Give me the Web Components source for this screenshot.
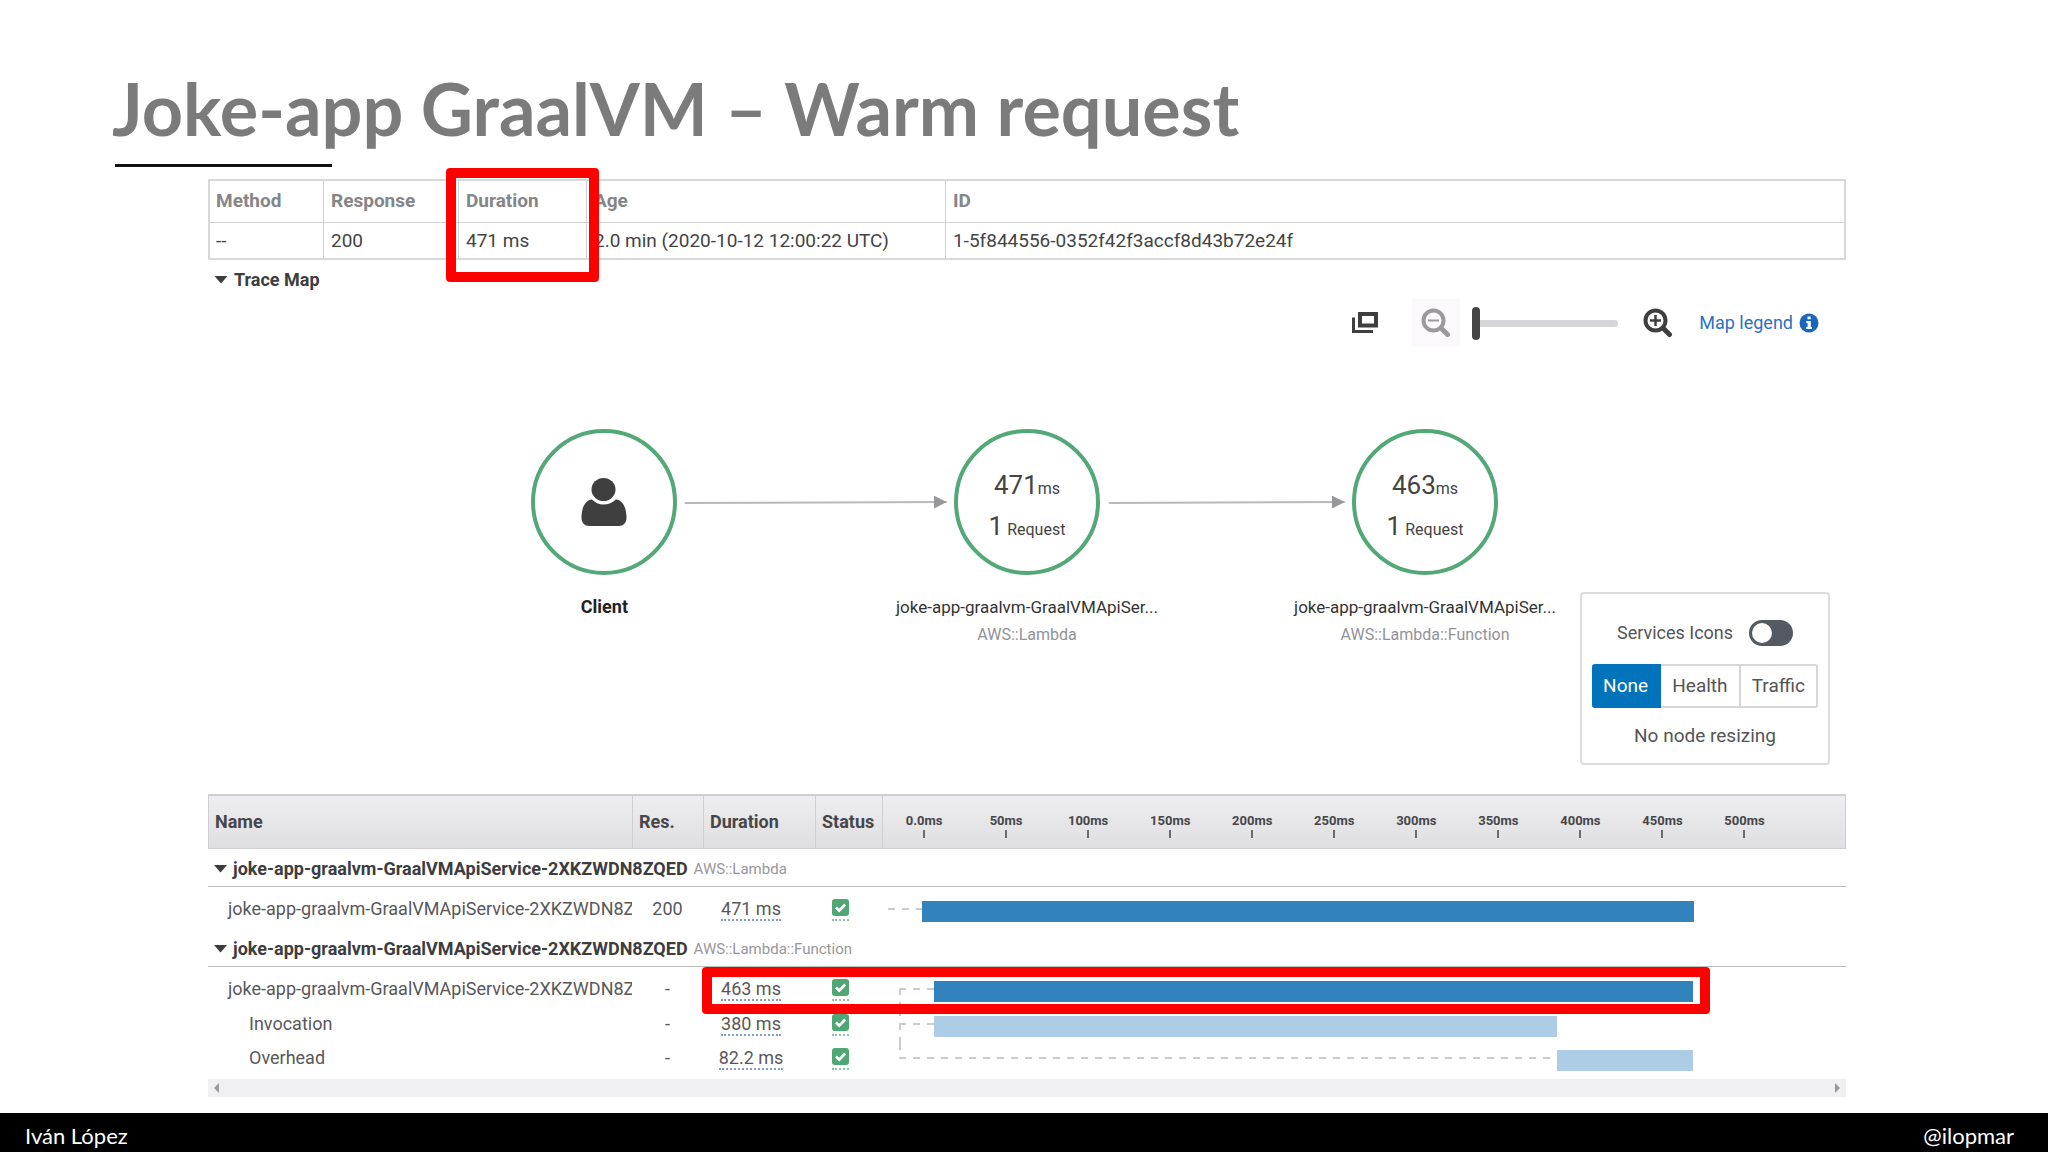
<!DOCTYPE html>
<html lang="en">
<head>
<meta charset="utf-8">
<title>Joke-app GraalVM – Warm request</title>
<style>
body {
    margin: 0;
    background: #fff;
    color: #444;
    font-family: Roboto, "Liberation Sans", sans-serif;
    font-size: 19px;
    line-height: 24px;
}
</style>
</head>
<body>
<slide-page>
    <slide-title slot="title">Joke-app GraalVM – Warm request</slide-title>
    <trace-summary></trace-summary>
    <trace-map></trace-map>
    <trace-timeline></trace-timeline>
    <slide-footer slot="footer">
        <span>Iván López</span>
        <span slot="handle">@ilopmar</span>
    </slide-footer>
</slide-page>

<script>
/**
 * Base for all elements here: puts the static `html` of the class
 * in an open shadow root.
 */
class BaseElement extends HTMLElement {
    constructor() {
        super();
        this.attachShadow({mode: 'open'});
        const template = document.createElement('template');
        template.innerHTML = this.constructor.html;
        this.shadowRoot.appendChild(template.content.cloneNode(true));
    }
}

class SlidePage extends BaseElement {
    static html = `
<style>
:host {
    display: flex;
    flex-direction: column;
    min-height: 100vh;
}
main {
    flex: 1;
    margin: 12px 202px 16px 208px;
}
</style>
<slot name="title"></slot>
<main><slot></slot></main>
<slot name="footer"></slot>
`;
}

class SlideTitle extends BaseElement {
    static html = `
<style>
:host {
    display: block;
    padding: 66px 112px 0;
}
h1 {
    margin: 0;
    color: #7b7b7c;
    font: 700 72px/84px Lato, "Open Sans", sans-serif;
}
h1::after {
    content: "";
    display: block;
    width: 217px;
    height: 3px;
    margin: 14px 0 0 3px;
    background: #111;
}
</style>
<h1><slot></slot></h1>
`;
}

class SlideFooter extends BaseElement {
    static html = `
<style>
footer {
    display: flex;
    justify-content: space-between;
    padding: 10px 34px 3px 25px;
    background: #000;
    color: #fff;
    font: 22px/26px Lato, sans-serif;
}
</style>
<footer><slot></slot><slot name="handle"></slot></footer>
`;
}

/**
 * Red frame around something important. The parent decides where.
 */
class HighlightBox extends BaseElement {
    static html = `
<style>
:host {
    position: absolute;
    box-sizing: border-box;
    border: 10px solid #f00;
    border-radius: 4px;
    pointer-events: none;
}
</style>
`;
}

class TraceSummary extends BaseElement {
    static html = `
<style>
:host {
    display: block;
}
table {
    width: 100%;
    table-layout: fixed;
    border-collapse: collapse;
    border: 2px solid #d8d8da;
}
th, td {
    position: relative;
    padding: 6px 7px 5px;
    border: 1px solid #d0d0d3;
    text-align: left;
    font-weight: 400;
    white-space: nowrap;
}
th {
    padding: 8px 7px 9px;
    color: #858587;
    font-weight: 700;
}
th:first-child, td:first-child {
    padding-left: 6px;
}
.method { width: 100px; }
.response { width: 120px; }
.duration { width: 113px; }
.age { width: 344px; }
highlight-box {
    top: -13px;
    left: -13px;
    right: -13px;
    height: 114px;
    z-index: 1;
}
</style>
<table>
    <thead>
        <tr>
            <th class="method">Method</th>
            <th class="response">Response</th>
            <th class="duration">Duration<highlight-box></highlight-box></th>
            <th class="age">Age</th>
            <th>ID</th>
        </tr>
    </thead>
    <tbody>
        <tr>
            <td>--</td>
            <td>200</td>
            <td>471 ms</td>
            <td>2.0 min (2020-10-12 12:00:22 UTC)</td>
            <td>1-5f844556-0352f42f3accf8d43b72e24f</td>
        </tr>
    </tbody>
</table>
`;
}

class MapToolbar extends BaseElement {
    static html = `
<style>
:host {
    display: flex;
    align-items: center;
    justify-content: flex-end;
    padding-right: 27px;
    height: 50px;
}
button {
    display: flex;
    align-items: center;
    justify-content: center;
    width: 48px;
    height: 48px;
    padding: 0;
    border: 0;
    background: none;
    color: #3f3f40;
}
button:disabled {
    background: #fbf9fb;
    color: #9a9a9a;
}
.pop {
    margin-right: 23px;
}
input {
    appearance: none;
    width: 146px;
    height: 34px;
    margin: 0 16px 0 12px;
    background: none;
}
input::-webkit-slider-runnable-track {
    height: 7px;
    border-radius: 4px;
    background: #d6d5d7;
}
input::-webkit-slider-thumb {
    appearance: none;
    width: 8px;
    height: 33px;
    margin-top: -13px;
    border-radius: 4px;
    background: #454546;
}
a {
    display: flex;
    align-items: center;
    gap: 6px;
    margin-left: 17px;
    color: #2a71c4;
    font-size: 18px;
    text-decoration: none;
}
</style>
<button class="pop" aria-label="Open in window">
    <svg width="26" height="22" viewBox="0 0 26 22" fill="none" stroke="currentColor">
        <rect x="8" y="2" width="16" height="11.5" stroke-width="4"/>
        <path d="M1.5 5.500V19.500H21" stroke-width="3"/>
    </svg>
</button>
<button disabled aria-label="Zoom out">
    <svg width="30" height="30" viewBox="0 0 30 30" fill="none" stroke="currentColor">
        <circle cx="12.500" cy="12.500" r="10" stroke-width="4"/>
        <path d="M20 20L26.500 26.500" stroke-width="5" stroke-linecap="round"/>
        <path d="M7 12.500H18" stroke-width="2"/>
    </svg>
</button>
<input type="range" min="0" max="100" value="0" aria-label="Zoom">
<button aria-label="Zoom in">
    <svg width="30" height="30" viewBox="0 0 30 30" fill="none" stroke="currentColor">
        <circle cx="12.500" cy="12.500" r="10" stroke-width="4"/>
        <path d="M20 20L26.500 26.500" stroke-width="5" stroke-linecap="round"/>
        <path d="M7 12.500H18M12.500 7V18" stroke-width="2.500"/>
    </svg>
</button>
<a href="#legend">Map legend
    <svg width="20" height="20" viewBox="0 0 20 20">
        <circle cx="10" cy="10" r="9.500" fill="#1a66bd"/>
        <path d="M8.500 3.500h3.200v2.700H8.500zM7.300 8h4.500v6h1.300v2H7.200v-2h1.400v-4H7.300z" fill="#fff"/>
    </svg>
</a>
`;
}

class MapNode extends BaseElement {
    static html = `
<style>
:host {
    position: absolute;
    top: 0;
    display: flex;
    flex-direction: column;
    align-items: center;
    width: 280px;
    margin-left: -140px;
    color: #333;
    font-size: 17px;
    white-space: nowrap;
}
.circle {
    display: flex;
    flex-direction: column;
    align-items: center;
    justify-content: center;
    gap: 1px;
    box-sizing: border-box;
    width: 146px;
    height: 146px;
    margin-bottom: 20px;
    border: 4px solid #52a876;
    border-radius: 50%;
    background: #fff;
    color: #444;
    font-size: 16px;
    line-height: 36px;
}
.circle ::slotted(span:first-child) {
    padding-top: 10px;
}
.type {
    color: #929297;
    font-size: 16px;
    line-height: 32px;
}
</style>
<div class="circle"><slot></slot></div>
<slot name="name"></slot>
<span class="type"><slot name="type"></slot></span>
`;
}

class ResizePanel extends BaseElement {
    static html = `
<style>
:host {
    display: flex;
    flex-direction: column;
    align-items: center;
    box-sizing: border-box;
    width: 250px;
    padding: 26px 10px 15px;
    border: 2px solid #dcdbde;
    border-radius: 4px;
    background: #fff;
    color: #545456;
}
label {
    display: flex;
    align-items: center;
    gap: 16px;
    font-size: 18px;
}
input {
    appearance: none;
    width: 44px;
    height: 26px;
    margin: 0;
    padding: 3px;
    border-radius: 13px;
    background: #545b60;
}
input::before {
    content: "";
    display: block;
    width: 20px;
    height: 20px;
    border-radius: 50%;
    background: #fff;
}
input:checked::before {
    margin-left: auto;
}
.buttons {
    display: flex;
    align-self: stretch;
    margin: 18px 0 16px;
}
button {
    flex: 1 1 auto;
    height: 44px;
    padding: 0;
    border: 2px solid #d6d5d8;
    border-left-width: 0;
    background: #fff;
    color: inherit;
    font: inherit;
}
button:first-child {
    border-color: #0073bb;
    border-radius: 3px 0 0 3px;
    background: #0073bb;
    color: #fff;
}
button:last-child {
    border-radius: 0 3px 3px 0;
}
</style>
<label>Services Icons <input type="checkbox" role="switch"></label>
<div class="buttons">
    <button aria-pressed="true">None</button>
    <button>Health</button>
    <button>Traffic</button>
</div>
<span>No node resizing</span>
`;
}

class TraceMap extends BaseElement {
    static html = `
<style>
:host {
    position: relative;
    display: block;
    height: 534px;
}
.toggle {
    display: flex;
    align-items: center;
    gap: 6px;
    margin: 0 0 6px;
    padding: 8px 0 0 6px;
    border: 0;
    background: none;
    color: #3d3d3f;
    font: 700 18px/24px Roboto, sans-serif;
}
.canvas {
    position: relative;
    margin-top: 81px;
    height: 230px;
}
.edges {
    position: absolute;
    width: 100%;
    height: 146px;
}
b {
    color: #222;
    font-size: 18px;
}
big {
    font-size: 26px;
}
resize-panel {
    position: absolute;
    right: 16px;
    bottom: 29px;
}
</style>
<button class="toggle" aria-expanded="true">
    <svg width="14" height="8" viewBox="0 0 14 8"><path d="M0.500 0h13L7 7.500z" fill="#3d3d3f"/></svg>
    Trace Map
</button>
<map-toolbar></map-toolbar>
<div class="canvas">
    <svg class="edges" aria-hidden="true">
        <defs>
            <marker id="arrow" viewBox="0 0 13 13" markerWidth="13" markerHeight="13" refX="13" refY="6.500" orient="auto" markerUnits="userSpaceOnUse">
                <path d="M0 0L13 6.500L0 13z" fill="#97979a"/>
            </marker>
        </defs>
        <g stroke="#b9b8bc" stroke-width="2">
            <line x1="29.1%" y1="74" x2="45.1%" y2="73" marker-end="url(#arrow)"/>
            <line x1="55%" y1="74" x2="69.4%" y2="73" marker-end="url(#arrow)"/>
        </g>
    </svg>
    <map-node style="left: 24.2%">
        <svg width="46" height="48" viewBox="0 0 46 48" fill="#3f3f40">
            <ellipse cx="22.500" cy="11.500" rx="12" ry="11.500"/>
            <path d="M11 21.500C14 24.500 18 26.500 22.500 26.500S32 24.500 35 21.500C42 22 45.500 30 45.500 40C45.500 45 42 48 38 48H8C4 48 .5 45 .5 40C.5 30 4 22 11 21.500z"/>
        </svg>
        <b slot="name">Client</b>
    </map-node>
    <map-node style="left: 50%">
        <span><big>471</big>ms</span>
        <span><big>1</big> Request</span>
        <span slot="name">joke-app-graalvm-GraalVMApiSer...</span>
        <span slot="type">AWS::Lambda</span>
    </map-node>
    <map-node style="left: 74.3%">
        <span><big>463</big>ms</span>
        <span><big>1</big> Request</span>
        <span slot="name">joke-app-graalvm-GraalVMApiSer...</span>
        <span slot="type">AWS::Lambda::Function</span>
    </map-node>
</div>
<resize-panel></resize-panel>
`;
}

const SERVICE = 'joke-app-graalvm-GraalVMApiService-2XKZWDN8ZQED';

// Start and end are in ms on the time axis.
const GROUPS = [
    {
        type: 'AWS::Lambda',
        spans: [
            {name: SERVICE, res: '200', duration: '471 ms', start: 0, end: 471},
        ],
    },
    {
        type: 'AWS::Lambda::Function',
        spans: [
            {name: SERVICE, res: '-', duration: '463 ms', start: 7, end: 470, highlight: true},
            {name: 'Invocation', res: '-', duration: '380 ms', start: 7, end: 387, child: true},
            {name: 'Overhead', res: '-', duration: '82.2 ms', start: 387, end: 470, child: true},
        ],
    },
];

// Where the axis starts, and the width of 1 ms, in % of the track.
const AXIS_START = 4.2;
const MS_WIDTH = 0.17;

class TraceTimeline extends BaseElement {
    static html = `
<style>
:host {
    display: block;
    color: #58585a;
}
table {
    width: 100%;
    table-layout: fixed;
    border-collapse: separate;
    border-spacing: 0;
}
th, td {
    padding: 0;
    text-align: left;
    white-space: nowrap;
}
thead th {
    height: 52px;
    padding-left: 6px;
    border: solid #cfced1;
    border-width: 2px 0 1px 1px;
    background: linear-gradient(#eeedef, #dfdee0);
    color: #464648;
    font-size: 18px;
}
thead th:last-child {
    padding: 0;
    border-right-width: 1px;
}
.name { width: 417px; }
.res { width: 64px; }
.duration { width: 105px; }
.status { width: 60px; }
.axis {
    display: flex;
    padding-top: 5px;
    font-size: 13px;
    line-height: 18px;
}
.axis span {
    flex: 0 0 8.53%;
    text-align: center;
}
.axis span::after {
    content: "";
    display: block;
    width: 2px;
    height: 8px;
    margin: 0 auto;
    background: #6a6a6c;
}
.group th {
    height: 37px;
    border-bottom: 1px solid #bcbbbe;
    font-weight: 400;
}
.group button {
    display: flex;
    align-items: center;
    gap: 6px;
    padding: 3px 0 0 6px;
    border: 0;
    background: none;
    color: #3d3d3f;
    font: 700 18px/24px Roboto, sans-serif;
}
.group small {
    color: #98989a;
    font-size: 15px;
    font-weight: 400;
}
.span {
    position: relative;
}
.span td {
    height: 30px;
    padding-bottom: 4px;
    font-size: 18px;
    text-align: center;
}
.span td:last-child {
    height: 34px;
    padding-bottom: 0;
}
.lead td {
    padding-top: 7px;
    padding-bottom: 5px;
}
.lead td:last-child {
    padding-bottom: 1px;
}
.span td:first-child {
    padding-left: 20px;
    overflow: hidden;
    text-align: left;
}
.span td:nth-child(3), .span td:nth-child(4) {
    padding-right: 16px;
}
.span.child td:first-child {
    padding-left: 41px;
}
.value {
    border-bottom: 2px dotted #7f9fc4;
}
.check {
    display: inline-block;
    padding-bottom: 3px;
    border-bottom: 2px dotted #8cc5a3;
    vertical-align: middle;
}
.check svg {
    display: block;
}
.track {
    display: flex;
    align-items: center;
    height: 34px;
}
.link {
    align-self: stretch;
    --dash: #cbcbcd 0 7px, transparent 7px 14px;
    background: repeating-linear-gradient(90deg, var(--dash)) 0 14px / 100% 2px no-repeat;
}
.tree .link {
    background:
        repeating-linear-gradient(90deg, var(--dash)) 0 14px / 100% 2px no-repeat,
        repeating-linear-gradient(var(--dash)) 0 0 / 2px 100% no-repeat;
}
.tree.lead .link {
    background-position: 0 14px, 0 14px;
}
.tree.last .link {
    background-size: 100% 2px, 2px 14px;
}
.bar {
    height: 21px;
    background: #3182bd;
}
.child .bar {
    background: #adcde6;
}
highlight-box {
    top: 0;
    left: 494px;
    right: 8.3%;
    height: 47px;
    z-index: 1;
}
.scroll {
    display: flex;
    justify-content: space-between;
    align-items: center;
    height: 18px;
    margin-top: 2px;
    padding: 0 6px;
    background: #f0eff1;
}
</style>
<table>
    <thead>
        <tr>
            <th class="name">Name</th>
            <th class="res">Res.</th>
            <th class="duration">Duration</th>
            <th class="status">Status</th>
            <th><div class="axis"></div></th>
        </tr>
    </thead>
    <tbody></tbody>
</table>
<div class="scroll">
    <svg width="5" height="10" viewBox="0 0 5 10"><path d="M5 0v10L0 5z" fill="#99999b"/></svg>
    <svg width="5" height="10" viewBox="0 0 5 10"><path d="M0 0v10l5-5z" fill="#99999b"/></svg>
</div>
`;

    connectedCallback() {
        const labels = ['0.0ms'];
        for (let ms = 50; ms <= 500; ms += 50) {
            labels.push(`${ms}ms`);
        }
        this.shadowRoot.querySelector('.axis').innerHTML = labels.map(label => `<span>${label}</span>`).join('');
        this.shadowRoot.querySelector('tbody').innerHTML = GROUPS.map(group => this.renderGroup(group)).join('');
    }

    renderGroup(group) {
        const rows = group.spans.map((span, i) => this.renderSpan(span, i, group.spans.length));
        return `
<tr class="group"><th colspan="5"><button aria-expanded="true">
    <svg width="13" height="8" viewBox="0 0 13 8"><path d="M0 0h13L6.500 7.500z" fill="#3d3d3f"/></svg>
    ${SERVICE} <small>${group.type}</small>
</button></th></tr>
${rows.join('')}`;
    }

    renderSpan(span, i, count) {
        const classes = ['span'];
        if (i === 0) classes.push('lead');
        if (i === count - 1) classes.push('last');
        if (count > 1) classes.push('tree');
        if (span.child) classes.push('child');

        const indent = count > 1 ? 17 : 6;
        const left = AXIS_START + span.start * MS_WIDTH;
        const width = (span.end - span.start) * MS_WIDTH;
        return `
<tr class="${classes.join(' ')}">
    <td>${span.name}</td>
    <td>${span.res}</td>
    <td><span class="value">${span.duration}</span>${span.highlight ? '<highlight-box></highlight-box>' : ''}</td>
    <td><span class="check"><svg width="17" height="17" viewBox="0 0 17 17" role="img" aria-label="OK">
        <rect width="17" height="17" rx="3" fill="#4fa873"/>
        <path d="M4 8.500l3.200 3.200L13.200 5.500" fill="none" stroke="#fff" stroke-width="2.600"/>
    </svg></span></td>
    <td><div class="track">
        <div class="link" style="margin-left: ${indent}px; width: calc(${left}% - ${indent}px)"></div>
        <div class="bar" style="width: ${width}%"></div>
    </div></td>
</tr>`;
    }
}

customElements.define('highlight-box', HighlightBox);
customElements.define('slide-page', SlidePage);
customElements.define('slide-title', SlideTitle);
customElements.define('slide-footer', SlideFooter);
customElements.define('trace-summary', TraceSummary);
customElements.define('map-toolbar', MapToolbar);
customElements.define('map-node', MapNode);
customElements.define('resize-panel', ResizePanel);
customElements.define('trace-map', TraceMap);
customElements.define('trace-timeline', TraceTimeline);
</script>
</body>
</html>
